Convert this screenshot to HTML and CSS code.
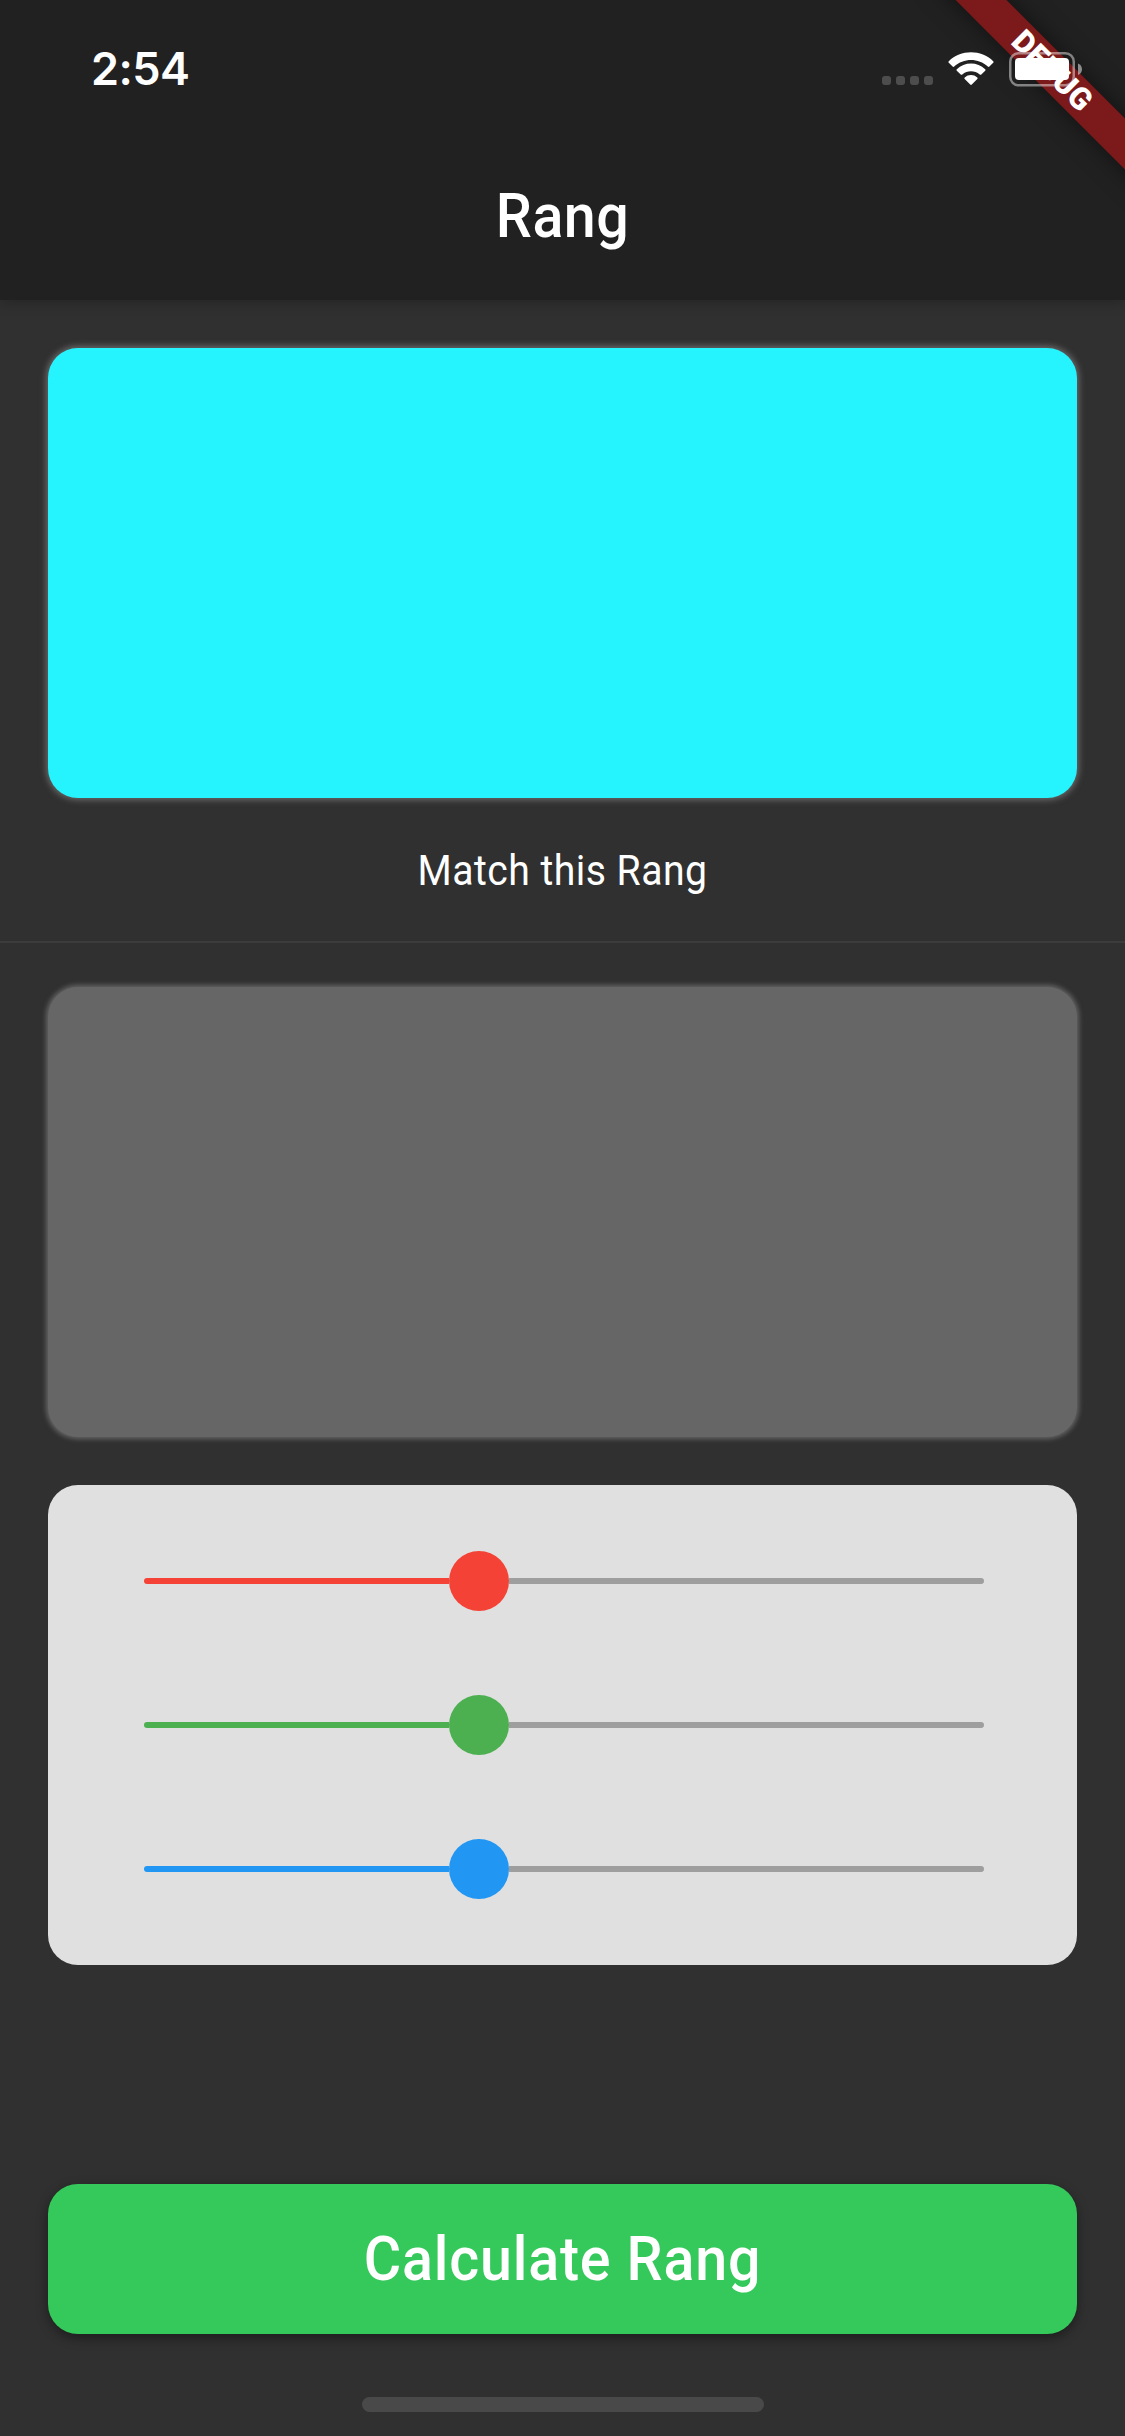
FILE: index.html
```html
<!DOCTYPE html>
<html lang="en">
<head>
<meta charset="utf-8">
<title>Rang</title>
<link rel="stylesheet" href="styles.css">
</head>
<body>
<div class="app">
  <header class="header">
    <div class="status-bar">
      <span class="clock">2:54</span>
      <div class="status-icons">
        <div class="cellular"><i></i><i></i><i></i><i></i></div>
        <svg class="wifi" width="46" height="34" viewBox="0 0 46 34" fill="#fff">
          <path d="M0.8 9.2C12.5-2.7 33.5-2.7 45.2 9.2Q46 10 45.2 10.8L41.4 14.6Q40.6 15.3 39.8 14.6C30.5 5.7 15.5 5.7 6.2 14.6Q5.400 15.300 4.600 14.600L0.800 10.800Q0 10 0.800 9.200Z"/>
          <path d="M8.800 17.200C16.500 9.600 29.500 9.600 37.200 17.200Q38 18 37.200 18.800L33.300 22.500Q32.500 23.200 31.700 22.500C26.900 18.100 19.100 18.100 14.300 22.500Q13.500 23.200 12.700 22.500L8.800 18.800Q8 18 8.800 17.200Z"/>
          <path d="M16.700 25.400C20.200 22.100 25.800 22.100 29.300 25.400Q30.100 26.200 29.300 27L23.800 32.500Q23 33.300 22.200 32.500L16.700 27Q15.900 26.200 16.700 25.400Z"/>
        </svg>
        <svg class="battery" width="74" height="35" viewBox="0 0 74 35">
          <rect x="1.250" y="1.250" width="63.500" height="32" rx="8.500" fill="none" stroke="#fff" stroke-opacity=".45" stroke-width="2.500"/>
          <rect x="6" y="6" width="54" height="22" rx="4" fill="#fff"/>
          <path d="M69 11.500C74.300 13.500 74.300 21 69 23Z" fill="#fff" fill-opacity=".5"/>
        </svg>
      </div>
    </div>
    <h1 class="title">Rang</h1>
  </header>
  <main class="content">
    <section class="target">
      <div class="swatch swatch-target"></div>
      <p class="caption">Match this Rang</p>
    </section>
    <section class="guess">
      <div class="swatch swatch-guess"></div>
      <div class="panel">
        <div class="slider red"><span class="active"></span><span class="thumb"></span><span class="rest"></span></div>
        <div class="slider green"><span class="active"></span><span class="thumb"></span><span class="rest"></span></div>
        <div class="slider blue"><span class="active"></span><span class="thumb"></span><span class="rest"></span></div>
      </div>
    </section>
    <button class="calculate"><span>Calculate Rang</span></button>
  </main>
  <div class="home-indicator"></div>
  <div class="banner"><span>DEBUG</span></div>
</div>
</body>
</html>
```
FILE: styles.css
```css
* { box-sizing: border-box; }
body { margin: 0; background: #303030; }

.app {
  position: relative;
  display: flex;
  flex-direction: column;
  width: 1125px;
  height: 2436px;
  overflow: hidden;
  color: #fff;
  font-family: Roboto, "Liberation Sans", sans-serif;
}

.header {
  height: 300px;
  background: #212121;
  box-shadow: 0 3px 12px rgba(0, 0, 0, .22);
}
.status-bar {
  display: flex;
  justify-content: space-between;
  height: 132px;
  padding: 0 42px 0 91px;
}
.clock {
  padding-top: 42px;
  font: 600 45px/54px Inter, sans-serif;
  letter-spacing: -.6px;
}
.status-icons {
  position: relative;
  z-index: 2;
  display: flex;
  align-items: flex-start;
  padding-top: 52px;
}
.cellular {
  display: flex;
  gap: 5px;
  padding-top: 24px;
  margin-right: 15px;
}
.cellular i {
  width: 9px;
  height: 9px;
  border-radius: 3px;
  background: #4d4d4d;
}
.wifi { margin-right: 15px; }
.title {
  margin: 0;
  padding-top: 48px;
  font-size: 61px;
  font-weight: 500;
  line-height: 72px;
  letter-spacing: .5px;
  text-align: center;
  transform: scaleX(.94);
}

.content { padding: 48px 48px 0; }
.swatch {
  height: 450px;
  border-radius: 30px;
  box-shadow: 0 0 6px 2px #6a6a6a;
}
.swatch-target { background: #25f4ff; }
.swatch-guess { background: #666; box-shadow: 0 0 5px 2px #666; }
.target {
  height: 595px;
  margin: 0 -48px;
  padding: 0 48px;
  border-bottom: 2px solid #3c3c3c;
}
.caption {
  margin: 0;
  padding-top: 46px;
  font-size: 42.5px;
  line-height: 54px;
  letter-spacing: .5px;
  text-align: center;
  transform: scaleX(.922);
}
.guess { padding-top: 44px; }
.panel {
  height: 480px;
  margin-top: 48px;
  padding: 24px 93px 24px 96px;
  border-radius: 30px;
  background: #e0e0e0;
}
.slider {
  display: flex;
  align-items: center;
  height: 144px;
}
.active {
  width: 305px;
  height: 6px;
  border-radius: 3px 0 0 3px;
  background: var(--tone);
}
.thumb {
  width: 60px;
  height: 60px;
  border-radius: 50%;
  background: var(--tone);
}
.rest {
  flex: 1;
  height: 6px;
  border-radius: 0 3px 3px 0;
  background: #9e9e9e;
}
.red { --tone: #f44336; }
.green { --tone: #4caf50; }
.blue { --tone: #2196f3; }

.calculate {
  display: block;
  width: 100%;
  height: 150px;
  margin-top: 219px;
  padding: 0;
  border: 0;
  border-radius: 30px;
  background: #35c95b;
  box-shadow: 0 4px 12px rgba(0, 0, 0, .4);
  color: #fff;
  font: 500 61px/72px Roboto, sans-serif;
}
.calculate span {
  display: inline-block;
  letter-spacing: .9px;
  transform: scaleX(.94);
}
.home-indicator {
  width: 402px;
  height: 15px;
  margin: 63px auto 0;
  border-radius: 8px;
  background: #494949;
}

/* Corner ribbon, laid across the status bar beneath its icons */
.banner {
  position: absolute;
  z-index: 1;
  left: 902px;
  top: 53px;
  width: 300px;
  height: 36px;
  background: #7b191b;
  box-shadow: 0 0 24px rgba(0, 0, 0, .5);
  transform: rotate(45deg);
  font-size: 31px;
  font-weight: 900;
  line-height: 36px;
  text-align: center;
}
```
